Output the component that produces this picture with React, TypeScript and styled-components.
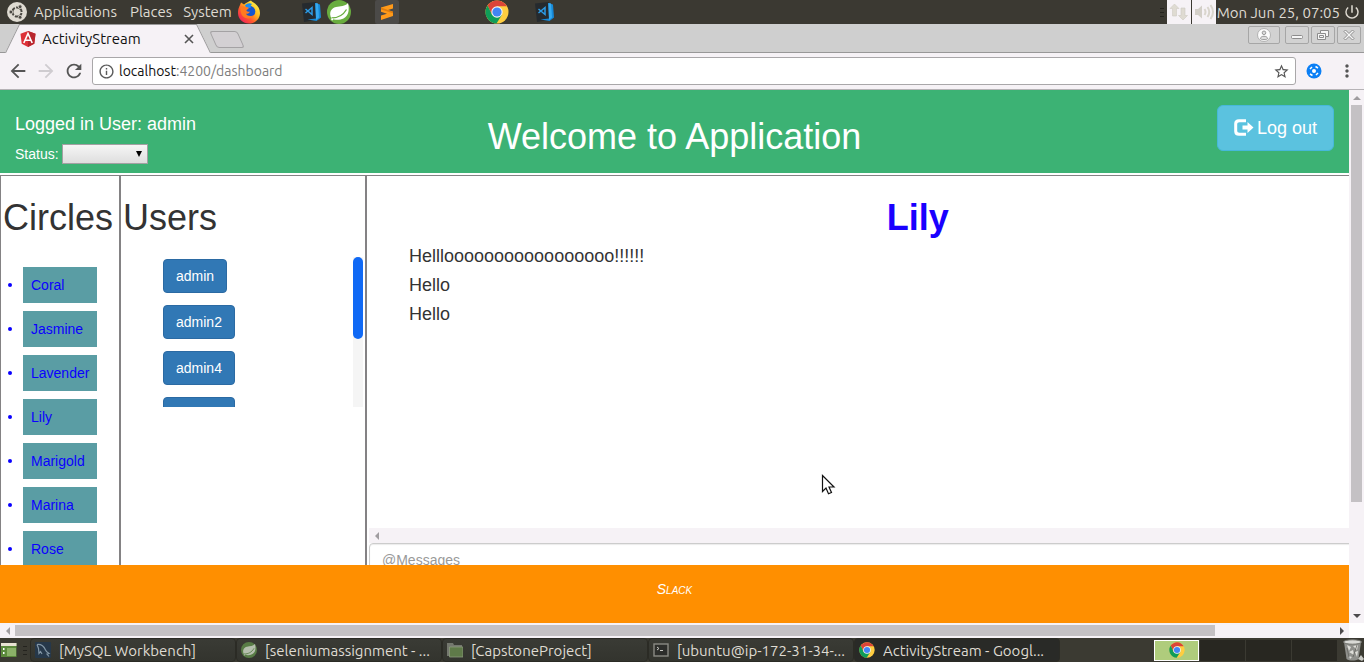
import React from 'react';
import styled, { createGlobalStyle } from 'styled-components';
import {
  MdArrowBack,
  MdArrowForward,
  MdRefresh,
  MdInfoOutline,
  MdStarBorder,
  MdMoreVert,
  MdPowerSettingsNew,
} from 'react-icons/md';

const uiFont = `"Ubuntu", "Noto Sans", sans-serif`;
const pageFont = `"Helvetica Neue", "Liberation Sans", Arial, sans-serif`;

const GlobalStyle = createGlobalStyle`
  *, *::before, *::after { box-sizing: border-box; }
  body { margin: 0; background: #fff; }
  button, input, select { font: inherit; }
  svg { display: block; flex: none; }
`;

const Desktop = styled.div`
  display: flex;
  flex-direction: column;
  height: 100vh;
  overflow: hidden;
  font-family: ${uiFont};
`;

/* ---------- top panel ---------- */

const Panel = styled.header`
  display: flex;
  align-items: center;
  height: 24px;
  flex: none;
  padding: 0 3px 0 7px;
  background: #3b3932;
  color: #dfdbd2;
  font-size: 15px;
`;

const MenuButton = styled.button<{ $gap: number }>`
  padding: 0;
  margin-left: ${(p) => p.$gap}px;
  border: 0;
  background: none;
  color: inherit;
  line-height: 24px;
`;

const Launcher = styled.button<{ $gap: number }>`
  padding: 0;
  margin-left: ${(p) => p.$gap}px;
  border: 0;
  background: none;
`;

const Tray = styled.div`
  display: flex;
  align-items: center;
  margin-left: auto;
`;

const Grip = styled.span`
  width: 4px;
  height: 9px;
  margin: 0 3px 0 6px;
  background: repeating-linear-gradient(#24231e 0 1px, transparent 1px 4px);
`;

const TrayIcon = styled.span`
  display: grid;
  place-items: center;
  width: 24px;
  height: 24px;
  margin-right: 1px;
  background: #f6f2f6;
`;

const Clock = styled.time`
  margin-right: 3px;
`;

/* ---------- browser chrome ---------- */

const TabStrip = styled.div`
  display: flex;
  height: 29px;
  flex: none;
  padding-left: 5px;
  background: #cfcfcf;
  border-bottom: 1px solid #989898;
`;

const Tab = styled.div`
  position: relative;
  z-index: 0;
  display: flex;
  align-items: center;
  width: 206px;
  height: 29px;
  padding: 0 16px 0 15px;
  color: #111;
  font-size: 15px;

  &::before,
  &::after {
    content: '';
    position: absolute;
    z-index: -1;
    top: 0;
    bottom: 0;
    width: 60%;
    background: #f6f2f6;
    border-top: 1px solid #989898;
  }
  &::before {
    left: 0;
    border-left: 1px solid #989898;
    transform: skewX(-26deg);
    transform-origin: bottom left;
  }
  &::after {
    right: 0;
    border-right: 1px solid #989898;
    transform: skewX(26deg);
    transform-origin: bottom right;
  }
`;

const TabTitle = styled.span`
  flex: 1;
  margin-left: 6px;
`;

const PlainButton = styled.button`
  display: grid;
  place-items: center;
  padding: 0;
  border: 0;
  background: none;
  color: #555;
  &:disabled { color: #cfccd0; }
`;

const NewTab = styled.button`
  width: 28px;
  height: 17px;
  margin: 7px 0 0 2px;
  border: 1px solid #a4a2a4;
  border-radius: 3px;
  background: #d3d0d3;
  transform: skewX(24deg);
`;

const WindowButtons = styled.div`
  display: flex;
  gap: 2px;
  margin: 2px 3px 0 auto;
`;

const WindowButton = styled.button<{ $wide?: boolean }>`
  display: grid;
  place-items: center;
  width: ${(p) => (p.$wide ? 32 : 24)}px;
  height: 18px;
  margin-right: ${(p) => (p.$wide ? 3 : 0)}px;
  padding: 0;
  border: 1px solid #a6a6a6;
  border-radius: 2px;
  background: #d2d2d2;
`;

const Toolbar = styled.div`
  display: flex;
  align-items: center;
  height: 37px;
  flex: none;
  padding: 0 7px;
  background: #f6f2f6;
  border-bottom: 1px solid #b6b3b6;
`;

const NavButtons = styled.div`
  display: flex;
  gap: 6px;
  width: 85px;
`;

const AddressBar = styled.div`
  display: flex;
  align-items: center;
  flex: 1;
  height: 28px;
  padding: 0 5px;
  border: 1px solid #a9a7a9;
  border-radius: 3px;
  background: #fff;
  color: #5a5a5a;
`;

const Address = styled.div`
  flex: 1;
  margin-left: 4px;
  color: #7d7d7d;
  font-size: 14px;
  line-height: 24px;
  outline: none;
  b { color: #111; font-weight: 400; }
`;

const Extensions = styled.div`
  display: flex;
  align-items: center;
  justify-content: space-between;
  width: 51px;
  margin-left: 10px;
`;

/* ---------- scrolled page ---------- */

const Viewport = styled.div`
  display: grid;
  grid-template-columns: minmax(0, 1fr) 15px;
  grid-template-rows: minmax(0, 1fr) 15px;
  flex: 1;
  min-height: 0;
`;

const ScrollBar = styled.div<{ $vertical?: boolean }>`
  display: flex;
  flex-direction: ${(p) => (p.$vertical ? 'column' : 'row')};
  align-items: center;
  background: #f6f2f6;
`;

const arrowSides = { up: 'bottom', down: 'top', left: 'right', right: 'left' };

const ScrollArrow = styled.button<{ $to: keyof typeof arrowSides; $dim?: boolean }>`
  display: grid;
  place-items: center;
  flex: none;
  width: 15px;
  height: 15px;
  padding: 0;
  border: 0;
  background: none;
  &::before {
    content: '';
    border: 4px solid transparent;
    border-${(p) => arrowSides[p.$to]}-color: ${(p) => (p.$dim ? '#a09da0' : '#4c4a4c')};
    border-${(p) => (p.$to === 'up' ? 'top' : p.$to === 'down' ? 'bottom' : p.$to)}-width: 0;
  }
`;

const ScrollTrack = styled.div`
  flex: 1;
  align-self: stretch;
`;

const ScrollThumb = styled.div<{ $vertical?: boolean; $length: number }>`
  width: ${(p) => (p.$vertical ? '11px' : `${p.$length}%`)};
  height: ${(p) => (p.$vertical ? `${p.$length}%` : '11px')};
  margin: ${(p) => (p.$vertical ? '0 2px' : '2px 0')};
  background: #c4c1c4;
`;

const Page = styled.div`
  display: flex;
  flex-direction: column;
  overflow: hidden;
  background: #fff;
  color: #333;
  font-family: ${pageFont};
  font-size: 14px;
  line-height: 20px;
`;

const AppHeader = styled.header`
  display: grid;
  grid-template-columns: 1fr auto 1fr;
  align-items: start;
  flex: none;
  height: 83px;
  margin-bottom: 2px;
  padding: 15px;
  background: #3cb274;
  color: #fff;
`;

const LoggedIn = styled.div`
  margin: 9px 0 10px;
  font-size: 18px;
`;

const StatusRow = styled.div`
  display: flex;
  align-items: center;
  gap: 3px;
`;

const SelectWrap = styled.span`
  position: relative;
  &::after {
    content: '';
    position: absolute;
    top: 7px;
    right: 6px;
    border: 3px solid transparent;
    border-top: 6px solid #000;
    border-bottom: 0;
    pointer-events: none;
  }
`;

const StatusSelect = styled.select`
  display: block;
  width: 86px;
  height: 20px;
  appearance: none;
  border: 1px solid #a3a0a3;
  border-radius: 0;
  background: linear-gradient(#f6f6f6, #dedede);
`;

const Welcome = styled.h1`
  margin: 12px 0 0;
  font-size: 36px;
  font-weight: 400;
  line-height: 40px;
`;

const LogoutButton = styled.button`
  display: flex;
  align-items: center;
  gap: 3px;
  justify-self: end;
  padding: 10px 16px;
  border: 1px solid #46b8da;
  border-radius: 6px;
  background: #5bc2df;
  color: #fff;
  font-size: 18px;
  line-height: 24px;
`;

const Columns = styled.main`
  display: grid;
  grid-template-columns: 121px 246px 1fr;
  flex: 1;
  min-height: 0;
  width: 109%;
  overflow: hidden;
  border-top: 1px solid #848284;
`;

const Column = styled.section`
  min-height: 390px;
  padding: 2px 1px 0 2px;
  border-right: 2px solid #848284;
  &:first-child { border-left: 1px solid #848284; }
`;

const ColumnTitle = styled.h2`
  margin: 20px 0 0;
  font-size: 36px;
  font-weight: 400;
  line-height: 40px;
`;

const CircleList = styled.ul`
  display: grid;
  gap: 8px;
  margin: 29px 0 0;
  padding: 0 0 0 5px;
  list-style: none;
`;

const CircleItem = styled.li`
  display: flex;
  align-items: center;
  gap: 11px;
  &::before {
    content: '';
    width: 4px;
    height: 4px;
    border-radius: 50%;
    background: #0a00ff;
  }
`;

const CircleLink = styled.a`
  width: 74px;
  padding: 8px;
  background: #5a9da4;
  color: #0a00ff;
  text-decoration: none;
`;

const UserScroller = styled.div`
  display: flex;
  justify-content: space-between;
  height: 150px;
  margin-top: 19px;
  padding-right: 1px;
  overflow: hidden;
`;

const UserList = styled.ul`
  display: grid;
  gap: 12px;
  align-content: start;
  justify-items: start;
  margin: 0;
  padding: 2px 0 0 40px;
  list-style: none;
`;

const UserButton = styled.button`
  display: block;
  padding: 6px 12px;
  border: 1px solid #2b6aa3;
  border-radius: 4px;
  background: #3178b5;
  color: #fff;
  line-height: 20px;
`;

const UserTrack = styled.div`
  width: 10px;
  background: #f5f5f5;
  &::before {
    content: '';
    display: block;
    height: 82px;
    border-radius: 5px;
    background: #1069f5;
  }
`;

const Chat = styled.section`
  padding: 2px 4px 0 2px;
`;

const ChatTitle = styled.h2`
  margin: 20px 0 4px;
  color: #1900ff;
  font-size: 36px;
  line-height: 40px;
  text-align: center;
`;

const Messages = styled.ul`
  height: 286px;
  margin: 0;
  padding: 0 0 0 40px;
  list-style: none;
  font-size: 18px;
  line-height: 29px;
`;

const MessageInput = styled.input`
  display: block;
  width: 100%;
  height: 34px;
  padding: 6px 12px;
  border: 1px solid #ccc;
  border-radius: 4px;
  box-shadow: inset 0 1px 1px rgba(0, 0, 0, 0.08);
  &::placeholder { color: #999; opacity: 1; }
`;

const AppFooter = styled.footer`
  flex: none;
  height: 58px;
  padding-top: 14px;
  background: #ff8f00;
  color: #fff;
  font-style: italic;
  font-variant: small-caps;
  text-align: center;
`;

/* ---------- bottom panel ---------- */

const Taskbar = styled.footer`
  display: flex;
  align-items: center;
  height: 24px;
  flex: none;
  background: #3b3a32;
  color: #dfdbd2;
  font-size: 15px;
`;

const Task = styled.button<{ $active?: boolean }>`
  display: flex;
  align-items: center;
  gap: 8px;
  flex: 0 1 206px;
  min-width: 0;
  height: 24px;
  padding: 0 4px;
  border: 1px solid #2b2b25;
  border-radius: 4px;
  background: ${(p) => (p.$active ? '#292a27' : 'linear-gradient(#3a3b35, #33342e)')};
  color: inherit;
  text-align: left;
`;

const TaskLabel = styled.span`
  overflow: hidden;
  white-space: nowrap;
`;

const Workspaces = styled.div`
  display: grid;
  grid-template-columns: repeat(4, 45px);
  gap: 1px;
  margin: 0 4px 0 auto;
`;

const Workspace = styled.button<{ $active?: boolean }>`
  display: grid;
  place-items: center;
  height: 21px;
  padding: 0;
  border: ${(p) => (p.$active ? '1px solid #fff' : '0')};
  background: ${(p) => (p.$active ? '#afcc7c' : '#282721')};
`;

const Pointer = styled.svg`
  position: absolute;
  left: 821px;
  top: 474px;
  pointer-events: none;
`;

/* ---------- drawings ---------- */

const UbuntuMark = () => (
  <svg width="20" height="20" viewBox="0 0 20 20">
    <circle cx="10" cy="10" r="10" fill="#dfdbd2" />
    <circle cx="10" cy="10" r="4.6" fill="none" stroke="#4a4842" strokeWidth="2" strokeDasharray="8.2 1.4" strokeDashoffset="-1" />
    <g fill="#4a4842" stroke="#dfdbd2" strokeWidth=".8">
      <circle cx="3.9" cy="10" r="1.9" />
      <circle cx="13.1" cy="4.7" r="1.9" />
      <circle cx="13.1" cy="15.3" r="1.9" />
    </g>
  </svg>
);

const Firefox = () => (
  <svg width="24" height="24" viewBox="0 0 24 24">
    <defs>
      <linearGradient id="fox" x1=".85" y1=".1" x2=".1" y2=".9">
        <stop offset="0" stopColor="#fff14a" />
        <stop offset=".35" stopColor="#ffb81c" />
        <stop offset=".65" stopColor="#ff5a2c" />
        <stop offset="1" stopColor="#f0205c" />
      </linearGradient>
    </defs>
    <path d="M3 5l1-2.5L7 4.6C9 2.5 12 1.800 14 .6c1 1.600 3 1.800 4.500 3.400C21 6 23 9 23 13c0 6-5 10.500-11 10.500S1 19 1 13c0-3 .7-5.500 2-8z" fill="url(#fox)" />
    <circle cx="12.500" cy="11.500" r="5.800" fill="#1456cf" />
    <path d="M8 5.500c2-2.500 5-3 7-1.500-1 1-1.500 2-1 3.500L10 9z" fill="#1a8cf0" />
    <path d="M3.500 7c1.500-1 3-.9 4.500-.2l3.500.6c.5 1.300-1 1.800-2 2.600-.3 1.200 1.500 2.300 3.500 1.500-.6 2-2.500 2.500-4 2.300 1.500 2.700 5.500 3 8.500.7-1.500 3.500-5.500 4.800-9 3.500C4.500 16.500 3 12 3.500 7z" fill="#ff7a20" />
  </svg>
);

const Code = () => (
  <svg width="20" height="20" viewBox="0 0 20 20">
    <path d="M0 1.500L14 0v18L2 20z" fill="#252a2e" />
    <path d="M13 1l5 1.500 1 13-4.500 3.500-9-1.500 8.500-1z" fill="#1689d8" />
    <path d="M13.500 1l2.500.5 1 14-3 2.500z" fill="#36a9ee" />
    <path d="M3.500 7l6.500 5.500V5.500L3.500 11" fill="none" stroke="#2c9be6" strokeWidth="1.500" />
  </svg>
);

const Leaf = ({ size, dim }: { size: number; dim?: boolean }) => {
  const green = dim ? '#587c46' : '#69ad3f';
  const white = dim ? '#b5bfae' : '#fff';
  return (
    <svg width={size} height={size} viewBox="0 0 24 24">
      <circle cx="12" cy="12" r="12" fill={green} />
      <path d="M21 3c1.500 6 1 13-4.500 15.500-4 1.800-9 1.500-12 0C1.500 13 4 8 9 7c4.500-.9 9-.5 12-4z" fill={white} />
      <path d="M4.500 18C11 18 16 15.500 19.500 9.500" fill="none" stroke={green} strokeWidth="1.300" />
      <circle cx="5.200" cy="19.300" r="1.100" fill={white} />
    </svg>
  );
};

const Sublime = () => (
  <svg width="24" height="24" viewBox="0 0 24 24">
    <rect width="24" height="24" rx="2" fill="#4b4a48" />
    <path d="M6 7.500L18 4v4.500l-5 1.600 5 1.700V16L6 20v-4.500l6-1.800-6-2z" fill="#ff9a1a" />
    <path d="M6 7.500l7 2.600 5 1.700v1.500L6 9.500z" fill="#e07c0c" />
  </svg>
);

const Chrome = ({ size }: { size: number }) => (
  <svg width={size} height={size} viewBox="0 0 24 24">
    <circle cx="12" cy="12" r="11.500" fill="#ffcd40" />
    <path d="M12 6.250h9.960A11.500 11.500 0 0 0 2.600 5.400L7.020 14.870 12 12z" fill="#db4437" />
    <path d="M2.600 5.400A11.500 11.500 0 0 0 11.500 23.500L16.980 14.870 12 12 7.020 14.870z" fill="#0f9d58" />
    <circle cx="12" cy="12" r="5.700" fill="#f3f3f3" />
    <circle cx="12" cy="12" r="4.600" fill="#4285f4" />
  </svg>
);

const NetworkArrows = () => (
  <svg width="20" height="18" viewBox="0 0 20 18" fill="#dfdbd2" stroke="#cfcbc3" strokeWidth=".6">
    <path d="M5.500 1l4.500 4.500H7.500V13h-4V5.500H1z" />
    <path d="M14 17l4.500-4.500H16V5h-4v7.500H9.500z" />
  </svg>
);

const Speaker = () => (
  <svg width="22" height="18" viewBox="0 0 22 18" fill="none" stroke="#d9d5cd" strokeWidth="2">
    <path d="M2 6h3l4-3.500v13L5 12H2z" fill="#d3cfc8" stroke="none" />
    <path d="M11.500 6q2 3 0 6M14.500 4q3.500 5 0 10M17.500 2q5 7 0 14" />
  </svg>
);

const AngularMark = () => (
  <svg width="16" height="16" viewBox="0 0 16 16">
    <path d="M8 0l7.500 2.700-1.200 10L8 16l-6.300-3.300L.5 2.700z" fill="#dd3138" />
    <path d="M8 0l7.500 2.700-1.200 10L8 16z" fill="#b8262e" />
    <path d="M3.800 12L8 2.500l4.200 9.500M5.500 9.200h5" fill="none" stroke="#fff" strokeWidth="1.600" />
  </svg>
);

const TabCross = () => (
  <svg width="12" height="12" viewBox="0 0 12 12">
    <path d="M2 2l8 8M10 2l-8 8" stroke="currentColor" strokeWidth="1.600" />
  </svg>
);

const Logout = () => (
  <svg width="20" height="18" viewBox="0 0 20 18" fill="#fff">
    <path d="M12 .2v3H5.500C4 3.200 3.200 4 3.200 5.200v6.600c0 1.200.8 2 2.300 2H12v3H5C1.800 16.800.2 15.300.2 12.300V4.700C.2 1.700 1.800.2 5 .2z" />
    <path d="M13.500 3l6 5.500-6 5.500v-3.500H8.500v-4h5z" />
  </svg>
);

const ExtensionMark = () => (
  <svg width="16" height="16" viewBox="0 0 16 16">
    <circle cx="8" cy="8" r="7.500" fill="#0b7ff5" />
    <circle cx="8" cy="8" r="2" fill="#fff" />
    <path d="M4 6l2-2M9.500 3.500l2.500 1.500M12 10l-2 2M6.500 12.500L4 11" stroke="#fff" strokeWidth="1.500" />
  </svg>
);

const glyph = { fill: '#f6f6f6', stroke: '#8c8c8c' };

const UserGlyph = () => (
  <svg width="14" height="14" viewBox="0 0 14 14">
    <circle cx="7" cy="7" r="6.500" fill="#fbfbfb" stroke="#b2b2b2" />
    <circle cx="7" cy="4.800" r="1.800" fill="#ddd" stroke="#999" />
    <path d="M3.500 10.500c0-3 7-3 7 0 0 1.500-7 1.500-7 0z" fill="#ddd" stroke="#999" />
  </svg>
);
const MinimizeGlyph = () => (
  <svg width="12" height="12" viewBox="0 0 12 12"><rect x=".5" y="6.500" width="11" height="3" rx="1" {...glyph} /></svg>
);
const RestoreGlyph = () => (
  <svg width="12" height="12" viewBox="0 0 12 12">
    <path d="M3.500 1.500h8v6h-3v3h-8v-6h3z" {...glyph} />
    <path d="M3.500 4.500h5v3M2.500 6.500h4v2h-4z" {...glyph} />
  </svg>
);
const CloseGlyph = () => (
  <svg width="12" height="12" viewBox="0 0 12 12">
    <path d="M2.500 1L6 4.500 9.500 1 11 2.500 7.500 6 11 9.500 9.500 11 6 7.500 2.500 11 1 9.500 4.500 6 1 2.500z" {...glyph} />
  </svg>
);

const ShowDesktop = () => (
  <svg width="17" height="16" viewBox="0 0 17 16">
    <rect x="1" y="1" width="15.500" height="14" fill="#5c8a3c" />
    <rect x="1" y="1" width="15.500" height="3" fill="#e9e3d3" />
    <path d="M3 6h1.500v2H3zM3 10h1.500v2H3z" fill="#fff" />
    <rect x="7" y="6" width="9" height="8" fill="#8bb168" />
  </svg>
);

const Dolphin = () => (
  <svg width="16" height="16" viewBox="0 0 16 16">
    <rect width="16" height="16" rx="1" fill="#26384a" />
    <path d="M2 2.500c4-.5 7 2 8.500 5.500.5 1.500 2 2.500 3.500 3.500l-2 .5 2 2.500M2 2.500l1.500 4 .5 5 1.500-2 1.500 2.500" fill="none" stroke="#8296a6" strokeWidth="1.200" />
  </svg>
);

const Folder = () => (
  <svg width="16" height="16" viewBox="0 0 16 16">
    <path d="M0 1h6l1 2h8v11H0z" fill="#74776e" />
    <path d="M2.500 5H16v10H2.500z" fill="#5f7a49" stroke="#8b9a7c" strokeWidth=".8" />
  </svg>
);

const Terminal = () => (
  <svg width="16" height="16" viewBox="0 0 16 16">
    <rect x="1" y="2" width="14" height="12" fill="#2d2e2b" stroke="#8a8a84" strokeWidth="1.400" />
    <path d="M4 5l2 1.500L4 8M7 8.500h3" fill="none" stroke="#c9c9c4" />
  </svg>
);

const Trash = () => (
  <svg width="23" height="22" viewBox="0 0 23 22">
    <path d="M3 3l2.500 17c3 2 9 2 12 0L20 3z" fill="#8f908c" />
    <ellipse cx="11.500" cy="3" rx="9" ry="2.200" fill="#d9dad6" stroke="#747570" />
    <path d="M6 6l4 2-2 4zM12 7l5-1-1 5zM8 13l4-2 1 5zM14 13l3-1-1 6zM8 17l3 1-2 2z" fill="#deded9" />
    <path d="M6 9l2 9M16 6l-4 12" stroke="#64655f" strokeWidth=".8" />
    <path d="M17 20l3-4 3 4-2 2z" fill="#c9cac5" />
  </svg>
);

const circles = ['Coral', 'Jasmine', 'Lavender', 'Lily', 'Marigold', 'Marina', 'Rose'];
const users = ['admin', 'admin2', 'admin4', 'admin5'];
const messages = ['Helllooooooooooooooooo!!!!!!', 'Hello', 'Hello'];
const tasks = [
  { label: '[MySQL Workbench]', icon: <Dolphin /> },
  { label: '[seleniumassignment - ...', icon: <Leaf size={16} dim /> },
  { label: '[CapstoneProject]', icon: <Folder /> },
  { label: '[ubuntu@ip-172-31-34-...', icon: <Terminal /> },
  { label: 'ActivityStream - Googl...', icon: <Chrome size={16} />, active: true },
];

export default function App() {
  return (
    <Desktop>
      <GlobalStyle />
      <Panel>
        <UbuntuMark />
        <MenuButton $gap={7}>Applications</MenuButton>
        <MenuButton $gap={13}>Places</MenuButton>
        <MenuButton $gap={11}>System</MenuButton>
        <Launcher $gap={5} aria-label="Firefox"><Firefox /></Launcher>
        <Launcher $gap={41} aria-label="Code"><Code /></Launcher>
        <Launcher $gap={5} aria-label="Spring Tools"><Leaf size={24} /></Launcher>
        <Launcher $gap={24} aria-label="Sublime Text"><Sublime /></Launcher>
        <Launcher $gap={86} aria-label="Chrome"><Chrome size={24} /></Launcher>
        <Launcher $gap={26} aria-label="Code"><Code /></Launcher>
        <Tray>
          <Grip />
          <TrayIcon><NetworkArrows /></TrayIcon>
          <TrayIcon><Speaker /></TrayIcon>
          <Clock>Mon Jun 25, 07:05</Clock>
          <MdPowerSettingsNew size={18} />
        </Tray>
      </Panel>

      <TabStrip>
        <Tab>
          <AngularMark />
          <TabTitle>ActivityStream</TabTitle>
          <PlainButton aria-label="Close tab"><TabCross /></PlainButton>
        </Tab>
        <NewTab aria-label="New tab" />
        <WindowButtons>
          <WindowButton $wide aria-label="Profile"><UserGlyph /></WindowButton>
          <WindowButton aria-label="Minimize"><MinimizeGlyph /></WindowButton>
          <WindowButton aria-label="Restore"><RestoreGlyph /></WindowButton>
          <WindowButton aria-label="Close window"><CloseGlyph /></WindowButton>
        </WindowButtons>
      </TabStrip>

      <Toolbar>
        <NavButtons>
          <PlainButton aria-label="Back"><MdArrowBack size={22} /></PlainButton>
          <PlainButton aria-label="Forward" disabled><MdArrowForward size={22} /></PlainButton>
          <PlainButton aria-label="Reload"><MdRefresh size={22} /></PlainButton>
        </NavButtons>
        <AddressBar>
          <MdInfoOutline size={17} />
          <Address role="textbox" aria-label="Address" contentEditable suppressContentEditableWarning>
            <b>localhost</b>:4200/dashboard
          </Address>
          <PlainButton aria-label="Bookmark this page"><MdStarBorder size={17} /></PlainButton>
        </AddressBar>
        <Extensions>
          <PlainButton aria-label="Extension"><ExtensionMark /></PlainButton>
          <PlainButton aria-label="Menu"><MdMoreVert size={20} /></PlainButton>
        </Extensions>
      </Toolbar>

      <Viewport>
        <Page>
          <AppHeader>
            <div>
              <LoggedIn>Logged in User: admin</LoggedIn>
              <StatusRow>
                <label htmlFor="status">Status:</label>
                <SelectWrap>
                  <StatusSelect id="status"><option value="" /></StatusSelect>
                </SelectWrap>
              </StatusRow>
            </div>
            <Welcome>Welcome to Application</Welcome>
            <LogoutButton><Logout />Log out</LogoutButton>
          </AppHeader>
          <Columns>
            <Column>
              <ColumnTitle>Circles</ColumnTitle>
              <CircleList>
                {circles.map((name) => (
                  <CircleItem key={name}><CircleLink href="#">{name}</CircleLink></CircleItem>
                ))}
              </CircleList>
            </Column>
            <Column>
              <ColumnTitle>Users</ColumnTitle>
              <UserScroller>
                <UserList>
                  {users.map((name) => (
                    <li key={name}><UserButton>{name}</UserButton></li>
                  ))}
                </UserList>
                <UserTrack />
              </UserScroller>
            </Column>
            <Chat>
              <ChatTitle>Lily</ChatTitle>
              <Messages>
                {messages.map((text, i) => <li key={i}>{text}</li>)}
              </Messages>
              <ScrollBar><ScrollArrow $to="left" $dim aria-label="Scroll messages left" /></ScrollBar>
              <MessageInput placeholder="@Messages" aria-label="Message" />
            </Chat>
          </Columns>
          <AppFooter>Slack</AppFooter>
        </Page>
        <ScrollBar $vertical>
          <ScrollArrow $to="up" $dim aria-label="Scroll up" />
          <ScrollTrack><ScrollThumb $vertical $length={79} /></ScrollTrack>
          <ScrollArrow $to="down" aria-label="Scroll down" />
        </ScrollBar>
        <ScrollBar>
          <ScrollArrow $to="left" $dim aria-label="Scroll left" />
          <ScrollTrack><ScrollThumb $length={91} /></ScrollTrack>
          <ScrollArrow $to="right" aria-label="Scroll right" />
        </ScrollBar>
      </Viewport>

      <Taskbar>
        <Launcher $gap={0} aria-label="Show desktop"><ShowDesktop /></Launcher>
        <Grip />
        {tasks.map((t) => (
          <Task key={t.label} $active={t.active}>{t.icon}<TaskLabel>{t.label}</TaskLabel></Task>
        ))}
        <Workspaces>
          <Workspace $active aria-label="Workspace 1"><Chrome size={16} /></Workspace>
          <Workspace aria-label="Workspace 2" />
          <Workspace aria-label="Workspace 3" />
          <Workspace aria-label="Workspace 4" />
        </Workspaces>
        <Trash />
      </Taskbar>

      <Pointer width="15" height="22" viewBox="0 0 15 22">
        <path d="M1.500 1.500v16l3.500-3.500 2.500 5.800 3-1.300L8 13h5z" fill="#fff" stroke="#111" strokeWidth="1.200" />
      </Pointer>
    </Desktop>
  );
}
